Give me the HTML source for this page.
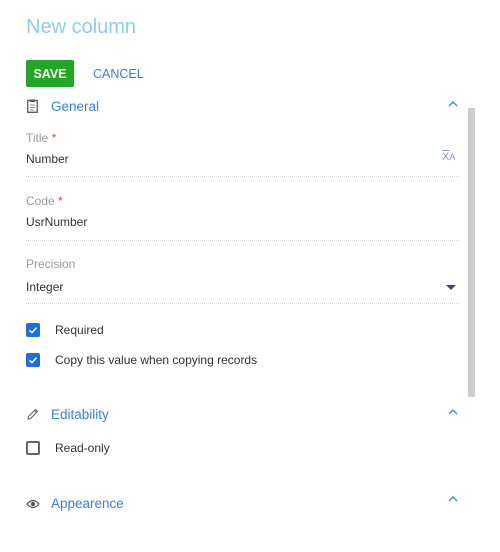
<!DOCTYPE html>
<html><head><style>
*{margin:0;padding:0;box-sizing:border-box}
body{width:500px;height:552px;background:#fff;font-family:"Liberation Sans",sans-serif;position:relative;overflow:hidden}
.a{position:absolute;white-space:nowrap}
.lbl{font-size:12px;color:#9a9a9a}
.val{font-size:12px;color:#333}
.line{position:absolute;left:26px;width:433px;border-top:1px dotted #cfcfcf;height:0}
.hd{font-size:13.5px;color:#3d7fd6}
.cb{position:absolute;left:26px;width:14px;height:14px;border-radius:2px;background:#1e6fd9}
.cbe{position:absolute;left:26px;width:14px;height:14px;border:2px solid #666;border-radius:2px}
.chev{position:absolute;left:448px;width:10px;height:8px}
</style></head><body>
<div class="a" style="left:26px;top:16px;font-size:20px;color:#93cbea">New column</div>
<div class="a" style="left:26px;top:60px;width:48px;height:27px;background:#23a526;border-radius:2px;color:#fff;font-size:12.5px;font-weight:bold;line-height:29px;text-align:center">SAVE</div>
<div class="a" style="left:93px;top:67px;font-size:12.5px;color:#3d7fd6">CANCEL</div>

<svg class="a" style="left:27px;top:99px" width="11" height="14" viewBox="0 0 11 14"><rect x="0.75" y="1.5" width="9.5" height="11.8" fill="none" stroke="#556" stroke-width="1.3"/><rect x="3" y="0.5" width="5" height="2.5" fill="#556"/><path d="M3 6h5M3 8.5h5M3 11h4" stroke="#889" stroke-width="1"/></svg>
<div class="a hd" style="left:51px;top:99px">General</div>
<svg class="chev" style="top:100px" viewBox="0 0 10 8"><path d="M1 6L5 2L9 6" fill="none" stroke="#3d8ae0" stroke-width="1.4"/></svg>
<div class="a" style="left:468px;top:108px;width:7px;height:289px;background:#cdcdcd"></div>

<div class="a lbl" style="left:26px;top:131px">Title <span style="color:#e04a3a">*</span></div>
<div class="a val" style="left:26px;top:152px">Number</div>
<div class="a" style="left:442px;top:151px;font-size:11px;color:#8a9ab8"><span style="text-decoration:overline">X</span><span style="font-size:9px">A</span></div>
<div class="line" style="top:176px"></div>

<div class="a lbl" style="left:26px;top:194px">Code <span style="color:#e04a3a">*</span></div>
<div class="a val" style="left:26px;top:215px">UsrNumber</div>
<div class="line" style="top:240px"></div>

<div class="a lbl" style="left:26px;top:257px">Precision</div>
<div class="a val" style="left:26px;top:280px">Integer</div>
<svg class="a" style="left:446px;top:285px" width="10" height="6"><path d="M0 0H10L5 5Z" fill="#3a4a6a"/></svg>
<div class="line" style="top:303px"></div>

<div class="cb" style="top:323px"></div>
<svg class="a" style="left:26px;top:323px" width="14" height="14"><path d="M3.5 7.3L6 9.6L10.5 4.6" fill="none" stroke="#fff" stroke-width="1.5"/></svg>
<div class="a val" style="left:55px;top:323px">Required</div>
<div class="cb" style="top:353px"></div>
<svg class="a" style="left:26px;top:353px" width="14" height="14"><path d="M3.5 7.3L6 9.6L10.5 4.6" fill="none" stroke="#fff" stroke-width="1.5"/></svg>
<div class="a val" style="left:55px;top:353px">Copy this value when copying records</div>

<svg class="a" style="left:26px;top:408px" width="13" height="13" viewBox="0 0 13 13"><path d="M2 11L2.5 8.5L9.5 1.5L11.5 3.5L4.5 10.5Z M8.5 2.5L10.5 4.5" fill="none" stroke="#666" stroke-width="1.1"/></svg>
<div class="a hd" style="left:51px;top:407px">Editability</div>
<svg class="chev" style="top:408px" viewBox="0 0 10 8"><path d="M1 6L5 2L9 6" fill="none" stroke="#3d8ae0" stroke-width="1.4"/></svg>
<div class="cbe" style="top:441px"></div>
<div class="a val" style="left:55px;top:441px">Read-only</div>

<svg class="a" style="left:26px;top:499px" width="14" height="10" viewBox="0 0 14 10"><path d="M1 5Q7 -2 13 5Q7 12 1 5Z" fill="none" stroke="#555" stroke-width="1.2"/><circle cx="7" cy="5" r="2.2" fill="#555"/></svg>
<div class="a hd" style="left:51px;top:496px">Appearence</div>
<svg class="chev" style="top:495px" viewBox="0 0 10 8"><path d="M1 6L5 2L9 6" fill="none" stroke="#3d8ae0" stroke-width="1.4"/></svg>
</body></html>
